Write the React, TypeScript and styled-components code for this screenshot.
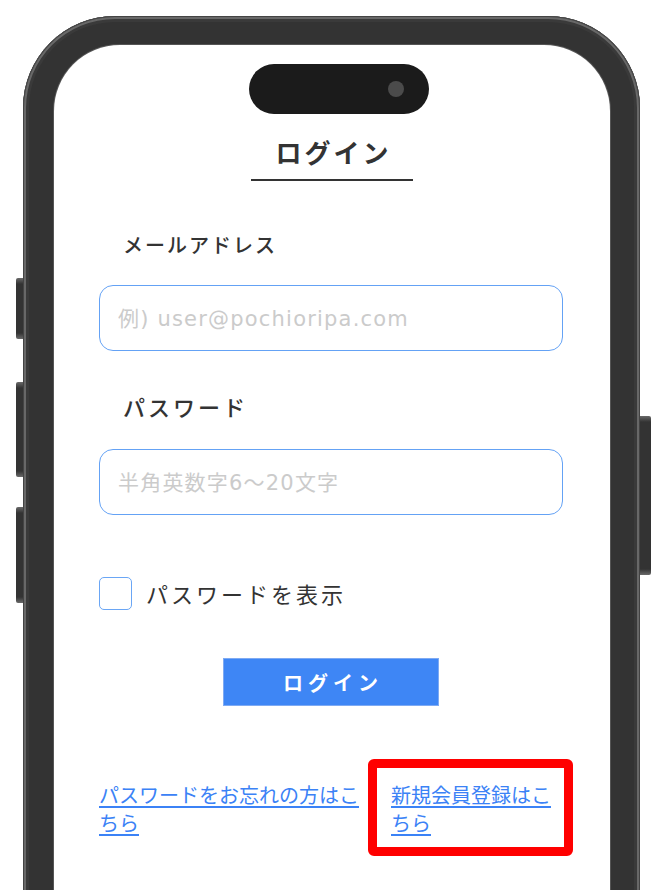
import React from 'react'
import styled, { createGlobalStyle } from 'styled-components'

const GlobalStyle = createGlobalStyle`
    html, body {
        margin: 0;
        padding: 0;
        background: #fff;
        overflow: hidden;
    }
    body {
        font-family: "Noto Sans CJK JP", "Noto Sans", sans-serif;
        color: #333;
    }
`

const Stage = styled.div`
    width: 665px;
    height: 890px;
    padding: 16px 0 0 23px;
    box-sizing: border-box;
    overflow: hidden;
`

const Phone = styled.div`
    position: relative;
    width: 617px;
    height: 1000px;
    box-sizing: border-box;
    padding: 29px 30px 0 31px;
    background: #333;
    border-radius: 92px;
    box-shadow: inset 0 0 0 1px #444, inset 0 0 0 3px #686868, inset 0 0 0 6px #3a3a3a;
`

const SideButton = styled.div<{ $side: 'left' | 'right', $top: number, $height: number }>`
    position: absolute;
    top: ${p => p.$top}px;
    height: ${p => p.$height}px;
    width: ${p => p.$side === 'left' ? 7 : 11}px;
    ${p => p.$side === 'left' ? 'left: -7px;' : 'right: -11px;'}
    border-radius: ${p => p.$side === 'left' ? '2px 0 0 2px' : '0 2px 2px 0'};
    background: linear-gradient(to bottom, #6a6a6a 0, #333 6px, #333 calc(100% - 6px), #6a6a6a 100%);
`

const Screen = styled.div`
    height: 100%;
    background: #fff;
    border-radius: 66px 66px 0 0;
    box-shadow: 0 0 0 1px #555;
    display: flex;
    flex-direction: column;
    align-items: center;
`

const Island = styled.div`
    align-self: flex-start;
    margin: 19px 0 0 195px;
    width: 180px;
    height: 50px;
    border-radius: 25px;
    background: #1b1b1b;
    display: flex;
    align-items: center;
    justify-content: flex-end;
    padding-right: 25px;
    box-sizing: border-box;
`

const Camera = styled.div`
    width: 16px;
    height: 16px;
    border-radius: 50%;
    background: #4b4b4b;
`

const Title = styled.h1`
    margin: 20px 0 0;
    width: 162px;
    padding-bottom: 9px;
    border-bottom: 2px solid #333;
    text-align: center;
    font-size: 26px;
    line-height: 36px;
    font-weight: 700;
    letter-spacing: 3px;
    text-indent: 3px;
    color: #333;
`

const Form = styled.form`
    align-self: stretch;
    display: flex;
    flex-direction: column;
    padding: 0 47px 0 45px;
`

const FieldLabel = styled.label<{ $size: number, $spacing: number, $top: number }>`
    display: block;
    margin: ${p => p.$top}px 0 0 24px;
    font-size: ${p => p.$size}px;
    letter-spacing: ${p => p.$spacing}px;
    line-height: 28px;
    font-weight: 500;
    color: #333;
`

const TextInput = styled.input<{ $top: number }>`
    display: block;
    margin-top: ${p => p.$top}px;
    height: 66px;
    box-sizing: border-box;
    border: 1.5px solid #64a2f5;
    border-radius: 14px;
    padding: 2px 18px 0;
    font-family: "DejaVu Sans", "Noto Sans CJK JP", sans-serif;
    font-size: 21px;
    letter-spacing: 1.2px;
    color: #333;
    outline: none;
    &::placeholder {
        color: #cbcbcb;
    }
`

const CheckRow = styled.label`
    display: flex;
    align-items: center;
    gap: 14px;
    margin-top: 62px;
    cursor: pointer;
`

const CheckBox = styled.span`
    width: 33px;
    height: 33px;
    box-sizing: border-box;
    border: 1.5px solid #6aa6f5;
    border-radius: 5px;
`

const CheckText = styled.span`
    font-size: 22px;
    letter-spacing: 3px;
    line-height: 33px;
    color: #333;
`

const SubmitButton = styled.button`
    align-self: center;
    margin: 48px 0 0 -1px;
    width: 216px;
    height: 48px;
    border: 1px solid #7eaaf3;
    background: #3e86f5;
    color: #fff;
    font-family: inherit;
    font-size: 20px;
    font-weight: 700;
    letter-spacing: 5px;
    text-indent: 5px;
    cursor: pointer;
`

const LinkRow = styled.div`
    display: grid;
    grid-template-columns: 269px 205px;
    align-items: start;
    margin-top: 53px;
`

const TextLink = styled.a<{ $top?: number }>`
    margin-top: ${p => p.$top ?? 0}px;
    font-size: 20px;
    line-height: 28px;
    color: #3b82f6;
    text-decoration: underline;
    text-underline-offset: 3px;
    cursor: pointer;
`

const Highlight = styled.div`
    border: 9px solid #ff0000;
    border-radius: 6px;
    padding: 13px 10px 10px 14px;
`

export default function App() {
    return (
        <Stage>
            <GlobalStyle />
            <Phone>
                <SideButton $side="left" $top={262} $height={61} />
                <SideButton $side="left" $top={366} $height={95} />
                <SideButton $side="left" $top={491} $height={96} />
                <SideButton $side="right" $top={400} $height={159} />
                <Screen>
                    <Island><Camera /></Island>
                    <Title>ログイン</Title>
                    <Form onSubmit={e => e.preventDefault()}>
                        <FieldLabel $size={20} $spacing={2} $top={50} htmlFor="email">メールアドレス</FieldLabel>
                        <TextInput $top={26} id="email" type="email" placeholder="例) user@pochioripa.com" />
                        <FieldLabel $size={22} $spacing={3} $top={41} htmlFor="password">パスワード</FieldLabel>
                        <TextInput $top={29} id="password" type="password" placeholder="半角英数字6〜20文字" />
                        <CheckRow>
                            <CheckBox />
                            <CheckText>パスワードを表示</CheckText>
                        </CheckRow>
                        <SubmitButton type="submit">ログイン</SubmitButton>
                        <LinkRow>
                            <TextLink $top={22}>パスワードをお忘れの方はこちら</TextLink>
                            <Highlight>
                                <TextLink>新規会員登録はこちら</TextLink>
                            </Highlight>
                        </LinkRow>
                    </Form>
                </Screen>
            </Phone>
        </Stage>
    )
}
